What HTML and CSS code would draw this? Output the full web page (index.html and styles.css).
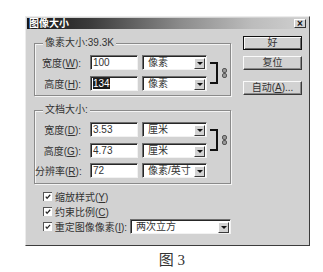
FILE: index.html
```html
<!DOCTYPE html>
<html lang="zh-CN">
<head>
  <meta charset="UTF-8" />
  <title>图像大小</title>
  <link rel="stylesheet" href="styles.css">
</head>
<body>
  <div class="dialog">
    <div class="titlebar">
      <span class="title">图像大小</span>
      <span class="close">×</span>
    </div>

    <div class="dialog-body">
      <div class="main">
        <div class="group">
          <span class="group-title">像素大小:39.3K</span>
          <div class="linked">
            <div class="rows">
              <div class="row">
                <label>宽度(<u>W</u>):</label>
                <span class="field">100</span>
                <span class="select">像素<i class="drop"></i></span>
              </div>
              <div class="row">
                <label>高度(<u>H</u>):</label>
                <span class="field"><span class="selected">134</span></span>
                <span class="select">像素<i class="drop"></i></span>
              </div>
            </div>
            <div class="bracket"></div>
            <svg class="chain" width="5" height="10" viewBox="0 0 5 10">
              <rect x="0.5" y="0.5" width="4" height="4" rx="1.5" fill="#999" stroke="#555" />
              <rect x="0.5" y="5.5" width="4" height="4" rx="1.5" fill="#999" stroke="#555" />
            </svg>
          </div>
        </div>

        <div class="group group-doc">
          <span class="group-title">文档大小:</span>
          <div class="linked">
            <div class="rows">
              <div class="row">
                <label>宽度(<u>D</u>):</label>
                <span class="field">3.53</span>
                <span class="select">厘米<i class="drop"></i></span>
              </div>
              <div class="row">
                <label>高度(<u>G</u>):</label>
                <span class="field">4.73</span>
                <span class="select">厘米<i class="drop"></i></span>
              </div>
            </div>
            <div class="bracket"></div>
            <svg class="chain" width="5" height="10" viewBox="0 0 5 10">
              <rect x="0.5" y="0.5" width="4" height="4" rx="1.5" fill="#999" stroke="#555" />
              <rect x="0.5" y="5.5" width="4" height="4" rx="1.5" fill="#999" stroke="#555" />
            </svg>
          </div>
          <div class="row row-res">
            <label>分辨率(<u>R</u>):</label>
            <span class="field">72</span>
            <span class="select">像素/英寸<i class="drop"></i></span>
          </div>
        </div>

        <div class="checks">
          <div class="check-row">
            <svg class="box" width="9" height="9" viewBox="0 0 9 9"><path d="M2 4 L3.5 6 L7 2" fill="none" stroke="#222" stroke-width="1.4" /></svg>
            <span>缩放样式(<u>Y</u>)</span>
          </div>
          <div class="check-row">
            <svg class="box" width="9" height="9" viewBox="0 0 9 9"><path d="M2 4 L3.5 6 L7 2" fill="none" stroke="#222" stroke-width="1.4" /></svg>
            <span>约束比例(<u>C</u>)</span>
          </div>
          <div class="check-row">
            <svg class="box" width="9" height="9" viewBox="0 0 9 9"><path d="M2 4 L3.5 6 L7 2" fill="none" stroke="#222" stroke-width="1.4" /></svg>
            <span>重定图像像素(<u>I</u>):</span>
            <span class="select select-wide">两次立方<i class="drop"></i></span>
          </div>
        </div>
      </div>

      <div class="buttons">
        <span class="btn btn-default">好</span>
        <span class="btn btn-reset">复位</span>
        <span class="btn btn-auto">自动(<u>A</u>)...</span>
      </div>
    </div>
  </div>

  <p class="caption">图 3</p>
</body>
</html>
```

FILE: styles.css
```css
* {
  box-sizing: border-box;
}

body {
  margin: 0;
  background: #fff;
  color: #333;
  font-family: 'Liberation Sans', 'Noto Sans CJK SC', sans-serif;
  font-size: 10px;
}

u {
  text-decoration: underline;
}

.dialog {
  margin: 16px 0 0 25px;
  width: 285px;
  padding: 1px;
  background: #d2d2d2;
  border: 1px solid;
  border-color: #ececec #3c3c3c #3c3c3c #ececec;
}

.titlebar {
  height: 11px;
  display: flex;
  align-items: center;
  justify-content: space-between;
  padding: 0 2px 0 2px;
  background: linear-gradient(90deg, #161616 0%, #3a3a3a 22%, #8c8c8c 55%, #bcbcbc 80%, #d0d0d0 100%);
}

.title {
  color: #fff;
  font-weight: bold;
  line-height: 11px;
}

.close {
  width: 12px;
  height: 9px;
  background: #d2d2d2;
  border: 1px solid;
  border-color: #fff #333 #333 #fff;
  color: #111;
  font-size: 10px;
  font-weight: bold;
  line-height: 7px;
  text-align: center;
}

.dialog-body {
  display: flex;
  gap: 12px;
  padding: 7px 6px 10px 7px;
}

.main {
  width: 197px;
}

.group {
  margin-top: 7px;
  padding-bottom: 4px;
  border: 1px solid #8a8a8a;
  box-shadow: 1px 1px 0 #f4f4f4, inset 1px 1px 0 #f4f4f4;
}

.group-doc {
  margin-top: 14px;
  padding-bottom: 5px;
}

.group-title {
  display: block;
  width: max-content;
  height: 12px;
  margin: -7px 0 0 8px;
  padding: 0 2px;
  background: #d2d2d2;
  line-height: 12px;
}

.linked {
  display: flex;
  margin-top: 6px;
}

.rows {
  display: flex;
  flex-direction: column;
  gap: 6px;
}

.row {
  display: flex;
  align-items: center;
  height: 15px;
}

.row label {
  width: 46px;
  margin-right: 9px;
  text-align: right;
  white-space: nowrap;
}

.row-res {
  margin-top: 5px;
}

.field {
  width: 48px;
  height: 15px;
  padding-left: 2px;
  background: #fff;
  border: 1px solid;
  border-color: #6e6e6e #f2f2f2 #f2f2f2 #6e6e6e;
  box-shadow: inset 1px 1px 0 #262626;
  line-height: 13px;
}

.selected {
  background: #1c1c1c;
  color: #fff;
}

.select {
  display: flex;
  align-items: center;
  justify-content: space-between;
  width: 65px;
  height: 15px;
  margin-left: 4px;
  padding: 0 1px 0 5px;
  background: #fff;
  border: 1px solid;
  border-color: #6e6e6e #f2f2f2 #f2f2f2 #6e6e6e;
  box-shadow: inset 1px 1px 0 #262626;
  line-height: 13px;
}

.select-wide {
  width: 103px;
  margin-left: 3px;
}

.drop {
  position: relative;
  width: 11px;
  height: 11px;
  margin-top: 1px;
  background: #d2d2d2;
  border: 1px solid;
  border-color: #fff #3a3a3a #3a3a3a #fff;
}

.drop::after {
  content: '';
  position: absolute;
  left: 2px;
  top: 3px;
  border-left: 3px solid transparent;
  border-right: 3px solid transparent;
  border-top: 3px solid #111;
}

.bracket {
  width: 8px;
  margin: 7px 0 7px 3px;
  border: 2px solid #111;
  border-left: none;
}

.chain {
  align-self: center;
  margin-left: 4px;
}

.checks {
  margin-top: 5px;
  padding-left: 9px;
}

.check-row {
  display: flex;
  align-items: center;
  height: 15px;
  white-space: nowrap;
}

.box {
  margin-right: 3px;
  background: #fff;
  border-top: 1px solid #555;
  border-left: 1px solid #555;
}

.buttons {
  display: flex;
  flex-direction: column;
  width: 59px;
}

.btn {
  height: 14px;
  background: #d2d2d2;
  border: 1px solid;
  border-color: #fafafa #3a3a3a #3a3a3a #fafafa;
  box-shadow: inset -1px -1px 0 #8a8a8a;
  line-height: 12px;
  text-align: center;
  white-space: nowrap;
}

.btn-default {
  border-color: #111;
  box-shadow: inset 1px 1px 0 #fafafa, inset -1px -1px 0 #6a6a6a;
}

.btn-reset {
  margin-top: 6px;
}

.btn-auto {
  margin-top: 11px;
}

.caption {
  width: 285px;
  margin: 6px 0 0 25px;
  padding-left: 9px;
  text-align: center;
  font-family: 'Liberation Serif', 'Noto Sans CJK SC', serif;
  font-size: 15px;
  line-height: 16px;
  color: #333;
}
```
